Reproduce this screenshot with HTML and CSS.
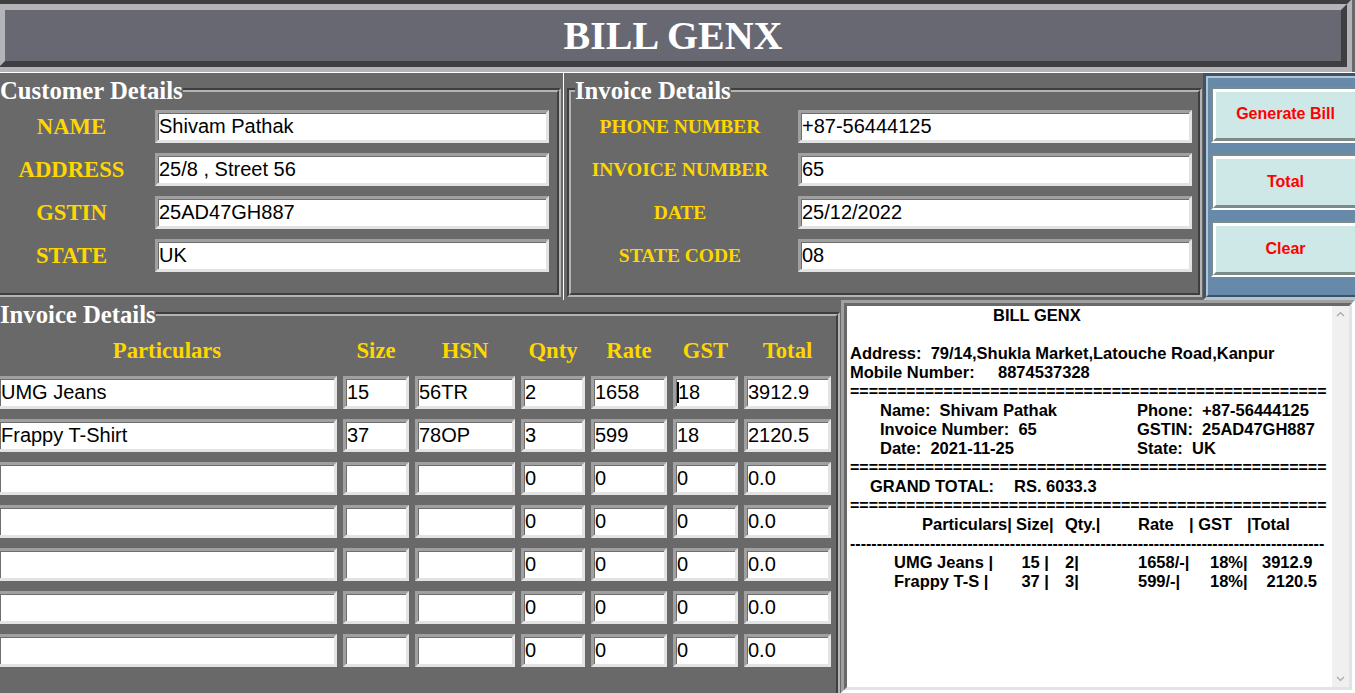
FILE: index.html
```html
<!DOCTYPE html>
<html>
<head>
<meta charset="utf-8">
<title>BILL GENX</title>
<link rel="stylesheet" href="styles.css">
</head>
<body>
<header class="title"><div class="title-in">BILL GENX</div></header>

<div class="upper">
  <section class="cust">
    <div class="groove">
      <div class="groove-in">
        <div class="lf-title">Customer Details</div>
        <div class="form form-cust">
          <div class="lbl">NAME</div><div class="entry">Shivam Pathak</div>
          <div class="lbl">ADDRESS</div><div class="entry">25/8 , Street 56</div>
          <div class="lbl">GSTIN</div><div class="entry">25AD47GH887</div>
          <div class="lbl">STATE</div><div class="entry">UK</div>
        </div>
      </div>
    </div>
  </section>

  <section class="inv">
    <div class="groove">
      <div class="groove-in">
        <div class="lf-title">Invoice Details</div>
        <div class="form form-inv">
          <div class="lbl">PHONE NUMBER</div><div class="entry">+87-56444125</div>
          <div class="lbl">INVOICE NUMBER</div><div class="entry">65</div>
          <div class="lbl">DATE</div><div class="entry">25/12/2022</div>
          <div class="lbl">STATE CODE</div><div class="entry">08</div>
        </div>
      </div>
    </div>
  </section>

  <section class="btns">
    <div class="btns-in">
      <div class="btn btn-first"><div class="btn-in">Generate Bill</div></div>
      <div class="btn"><div class="btn-in">Total</div></div>
      <div class="btn"><div class="btn-in">Clear</div></div>
    </div>
  </section>
</div>

<div class="lower">
  <section class="items">
    <div class="groove">
      <div class="groove-in">
        <div class="lf-title">Invoice Details</div>
        <div class="grid-items">
          <div class="colh">Particulars</div><div class="colh">Size</div><div class="colh">HSN</div><div class="colh">Qnty</div><div class="colh">Rate</div><div class="colh">GST</div><div class="colh">Total</div>

          <div class="entry">UMG Jeans</div><div class="entry">15</div><div class="entry">56TR</div><div class="entry">2</div><div class="entry">1658</div><div class="entry"><span class="caret"></span>18</div><div class="entry">3912.9</div>
          <div class="entry">Frappy T-Shirt</div><div class="entry">37</div><div class="entry">78OP</div><div class="entry">3</div><div class="entry">599</div><div class="entry">18</div><div class="entry">2120.5</div>
          <div class="entry"></div><div class="entry"></div><div class="entry"></div><div class="entry">0</div><div class="entry">0</div><div class="entry">0</div><div class="entry">0.0</div>
          <div class="entry"></div><div class="entry"></div><div class="entry"></div><div class="entry">0</div><div class="entry">0</div><div class="entry">0</div><div class="entry">0.0</div>
          <div class="entry"></div><div class="entry"></div><div class="entry"></div><div class="entry">0</div><div class="entry">0</div><div class="entry">0</div><div class="entry">0.0</div>
          <div class="entry"></div><div class="entry"></div><div class="entry"></div><div class="entry">0</div><div class="entry">0</div><div class="entry">0</div><div class="entry">0.0</div>
          <div class="entry"></div><div class="entry"></div><div class="entry"></div><div class="entry">0</div><div class="entry">0</div><div class="entry">0</div><div class="entry">0.0</div>
        </div>
      </div>
    </div>
  </section>

  <section class="bill">
    <div class="bill-in">
      <div class="bill-text">
        <div class="ln"><span class="c-title">BILL GENX</span></div>
        <div class="ln"></div>
        <div class="ln">Address:  79/14,Shukla Market,Latouche Road,Kanpur</div>
        <div class="ln"><span class="k-mob">Mobile Number:</span>8874537328</div>
        <div class="ln rule">===================================================</div>
        <div class="ln info"><span class="k-info">Name:  Shivam Pathak</span>Phone:  +87-56444125</div>
        <div class="ln info"><span class="k-info">Invoice Number:  65</span>GSTIN:  25AD47GH887</div>
        <div class="ln info"><span class="k-info">Date:  2021-11-25</span>State:  UK</div>
        <div class="ln rule">===================================================</div>
        <div class="ln gt"><span class="k-gt">GRAND TOTAL:</span>RS. 6033.3</div>
        <div class="ln rule">===================================================</div>
        <div class="ln th"><span class="h1">Particulars|</span><span class="h2">Size|</span><span class="h3">Qty.|</span><span class="h4">Rate</span><span class="h5">| GST</span><span>|Total</span></div>
        <div class="ln rule">-----------------------------------------------------------------------------------------</div>
        <div class="ln tr"><span class="r1">UMG Jeans |</span><span class="r2">15 |</span><span class="r3">2|</span><span class="r4">1658/-|</span><span class="r5">18%|</span><span>3912.9</span></div>
        <div class="ln tr"><span class="r1">Frappy T-S |</span><span class="r2">37 |</span><span class="r3">3|</span><span class="r4">599/-|</span><span class="r5">18%|</span><span> 2120.5</span></div>
      </div>
      <div class="sb">
        <svg class="sb-arrow" width="17" height="17" viewBox="0 0 17 17"><polyline points="5,10 8.5,6.5 12,10" fill="none" stroke="#a6a6a6" stroke-width="1.2"/></svg>
        <div class="sb-track"></div>
        <svg class="sb-arrow" width="17" height="17" viewBox="0 0 17 17"><polyline points="5,7 8.5,10.5 12,7" fill="none" stroke="#a6a6a6" stroke-width="1.2"/></svg>
      </div>
    </div>
  </section>
</div>
</body>
</html>
```

FILE: styles.css
```css
* { box-sizing: border-box; }

html, body {
  margin: 0;
  padding: 0;
}

body {
  background: #696969;
  width: 1355px;
  height: 693px;
  overflow: hidden;
  font-family: "Liberation Sans", Arial, sans-serif;
}

/* ---------- title bar ---------- */
.title {
  margin: -1px 0 0 -6px;
  width: 1358px;
  height: 73px;
  border: 5px solid;
  border-color: #3f3f42 #b4b4b8 #b4b4b8 #3f3f42;
}

.title-in {
  height: 100%;
  border: 6px solid;
  border-color: #b4b4b8 #3f3f42 #3f3f42 #b4b4b8;
  background: #686873;
  color: #ffffff;
  font: bold 40px "Liberation Serif", "Times New Roman", serif;
  display: flex;
  align-items: center;
  justify-content: center;
}

/* ---------- groove frames ---------- */
.groove {
  border: 2px solid;
  border-color: #3f3f3f #b4b4b4 #b4b4b4 #3f3f3f;
}

.groove-in {
  height: 100%;
  border: 2px solid;
  border-color: #b4b4b4 #3f3f3f #3f3f3f #b4b4b4;
}

.lf-title {
  width: fit-content;
  margin-top: -13px;
  font: bold 24.7px/24px "Liberation Serif", "Times New Roman", serif;
  color: #ffffff;
  background: #696969;
  white-space: nowrap;
}

/* ---------- upper row ---------- */
.upper {
  display: flex;
  height: 228px;
  border-top: 1px solid #ffffff;
}

.cust {
  flex: 0 0 567px;
  margin-left: -4px;
  padding-top: 15px;
}

.cust .groove {
  width: 565px;
  height: 209px;
}

.inv {
  flex: 0 0 640px;
  border-left: 1px solid #ffffff;
  padding: 15px 0 0 3px;
}

.inv .groove {
  width: 635px;
  height: 209px;
}

.inv .lf-title {
  margin-left: 4px;
}

.form {
  display: grid;
  margin-top: 7px;
  row-gap: 10px;
  grid-auto-rows: 33px;
}

.form-cust {
  grid-template-columns: 143px 394px;
  column-gap: 12px;
}

.form-inv {
  grid-template-columns: 218px 394px;
  column-gap: 9px;
}

.lbl {
  display: flex;
  align-items: center;
  justify-content: center;
  color: #ffd700;
  font: bold 22.7px "Liberation Serif", "Times New Roman", serif;
  white-space: nowrap;
}

.form-inv .lbl {
  font-size: 19.5px;
}

.entry {
  display: flex;
  align-items: center;
  background: #ffffff;
  border: 3px solid;
  border-color: #a0a0a0 #e3e3e3 #e3e3e3 #a0a0a0;
  box-shadow: inset 1px 1px 0 #6e6e6e;
  padding: 0 0 0 1px;
  font: 20px "Liberation Sans", Arial, sans-serif;
  color: #000000;
  white-space: pre;
  overflow: hidden;
}

.caret {
  display: inline-block;
  width: 2px;
  height: 21px;
  background: #000000;
  margin-right: -1px;
}

/* ---------- buttons ---------- */
.btns {
  flex: 0 0 170px;
  border: 3px solid;
  border-color: #3e5366 #b3c4d5 #b3c4d5 #3e5366;
}

.btns-in {
  height: 100%;
  border: 2px solid;
  border-color: #b3c4d5 #3e5366 #3e5366 #b3c4d5;
  background: #678aab;
  padding: 9px 0 0 3px;
}

.btn {
  width: 150px;
  height: 56px;
  margin-bottom: 11px;
  border: 2px solid;
  border-color: #7b8b8a #ffffff #ffffff #7b8b8a;
}

.btn-in {
  height: 100%;
  border: 3px solid;
  border-color: #ffffff #7b8b8a #7b8b8a #ffffff;
  background: #cde8e6;
  display: flex;
  align-items: center;
  justify-content: center;
  color: #ff0000;
  font: bold 16px "Liberation Sans", Arial, sans-serif;
  padding-right: 1px;
}

.btn-first .btn-in {
  padding-bottom: 3px;
}

/* ---------- lower row ---------- */
.lower {
  display: flex;
  height: 393px;
  overflow: hidden;
}

.items {
  flex: 0 0 845px;
  margin-left: -4px;
  padding-top: 12px;
}

.items .groove {
  width: 844px;
  height: 420px;
}

.grid-items {
  display: grid;
  margin: 11px 0 0 -3px;
  grid-template-columns: 340px 66px 100px 64px 76px 65px 87px;
  grid-template-rows: 28px;
  grid-auto-rows: 33px;
  column-gap: 6px;
  row-gap: 10px;
}

.colh {
  text-align: center;
  color: #ffd700;
  font: bold 22.7px/26px "Liberation Serif", "Times New Roman", serif;
  white-space: nowrap;
}

/* ---------- bill text ---------- */
.bill {
  flex: 1 1 auto;
  border: 3px solid;
  border-color: #a0a0a0 #ffffff #ffffff #a0a0a0;
}

.bill-in {
  height: 100%;
  display: flex;
  border: 3px solid;
  border-color: #696969 #e3e3e3 #e3e3e3 #696969;
}

.bill-text {
  flex: 1 1 auto;
  background: #ffffff;
  padding-left: 3px;
  color: #000000;
  font: bold 16.5px/19px "Liberation Sans", Arial, sans-serif;
  overflow: hidden;
}

.ln {
  height: 19px;
  white-space: pre;
  overflow: hidden;
}

.rule {
  font-size: 16px;
}

.ln > span {
  display: inline-block;
}

.c-title { padding-left: 143px; }
.k-mob { width: 148px; }

.info { padding-left: 30px; }
.k-info { width: 257px; }

.gt { padding-left: 20px; }
.k-gt { width: 144px; }

.th { padding-left: 72px; }
.h1 { width: 94px; }
.h2 { width: 49px; }
.h3 { width: 73px; }
.h4 { width: 51px; }
.h5 { width: 58px; }

.tr { padding-left: 44px; }
.r1 { width: 120px; }
.r2 { width: 51px; padding-right: 16px; text-align: right; }
.r3 { width: 73px; }
.r4 { width: 72px; }
.r5 { width: 52px; }

.sb {
  flex: 0 0 17px;
  display: flex;
  flex-direction: column;
  background: #f0f0f0;
}

.sb-arrow {
  display: block;
  flex: 0 0 17px;
}

.sb-track {
  flex: 1 1 auto;
}
```
